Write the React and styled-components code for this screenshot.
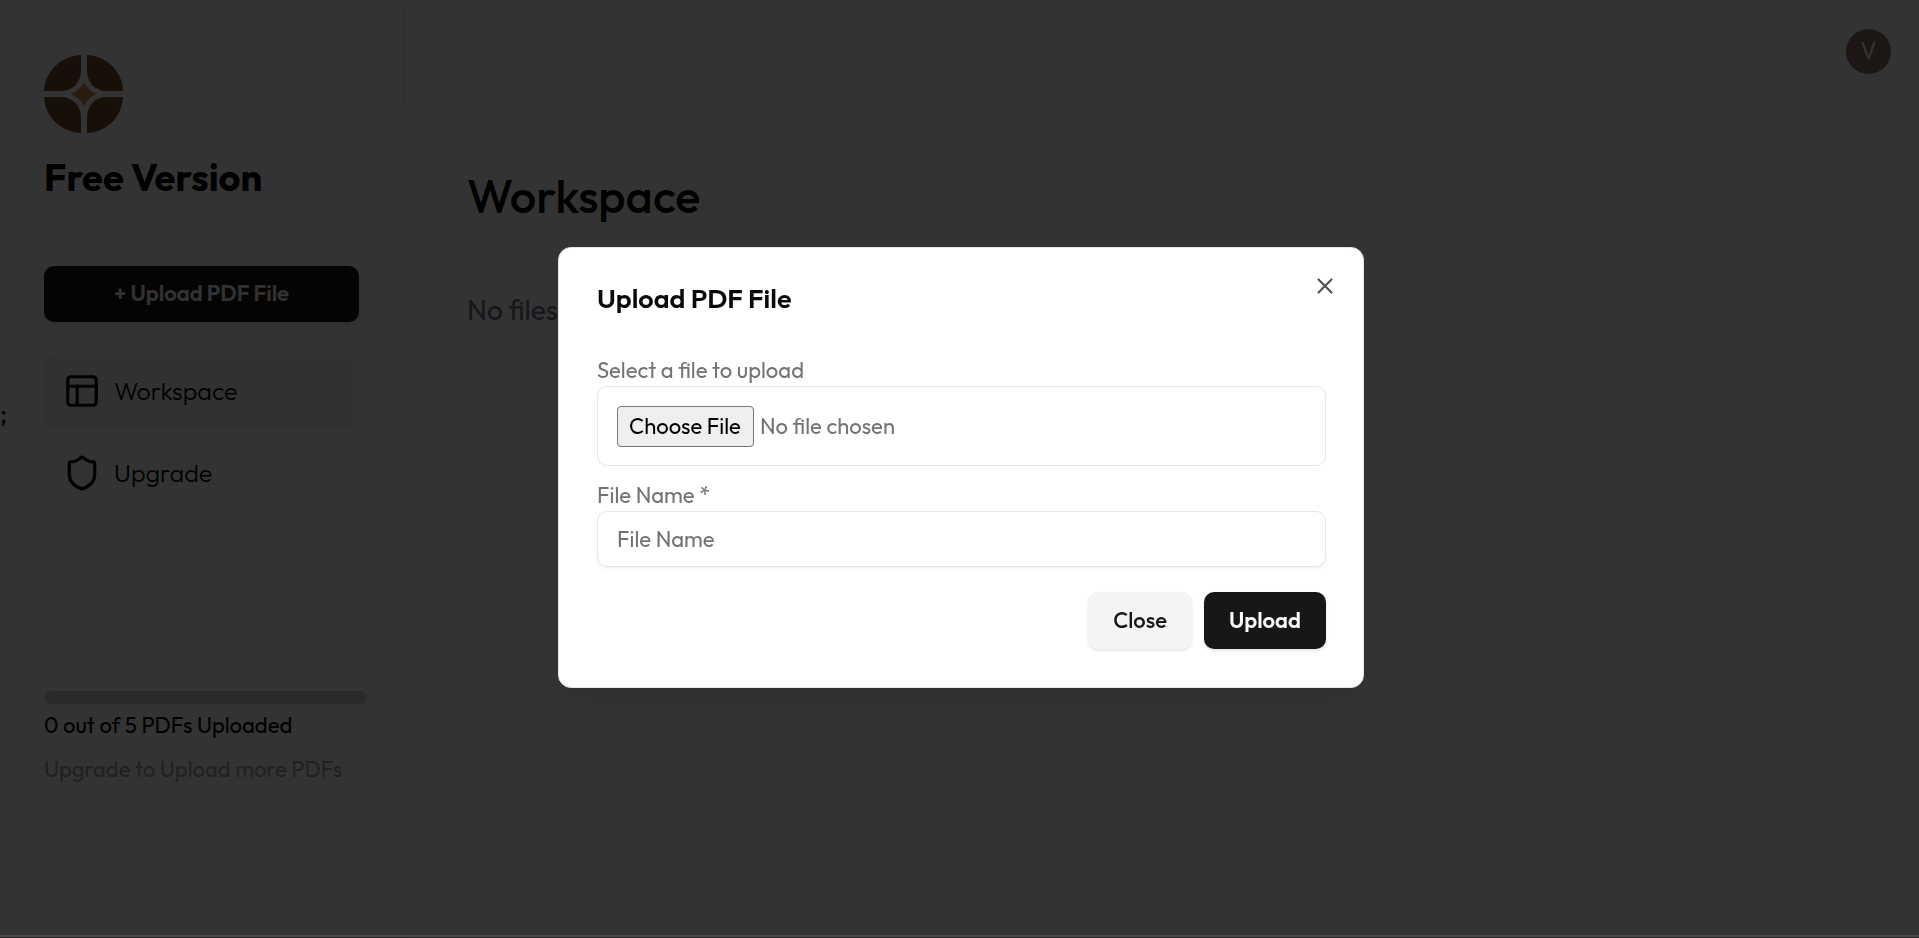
import React from "react";
import styled, { createGlobalStyle } from "styled-components";
import { PanelsTopLeft, Shield, X } from "lucide-react";

const GlobalStyle = createGlobalStyle`
  *, *::before, *::after { box-sizing: border-box; }
  body {
    margin: 0;
    background: #fff;
    color: #000;
    font-family: Outfit, Lato, "Open Sans", sans-serif;
    font-size: 22px;
    line-height: 32px;
  }
  button, input { font: inherit; }
  h1, h2, p { margin: 0; }
`;

const Page = styled.div`
  display: flex;
  min-height: 100vh;
  border-bottom: 1px solid #241f22;
`;

const Stray = styled.span`
  position: absolute;
  left: 0;
  top: 398px;
  font-size: 26px;
`;

const Sidebar = styled.aside`
  display: flex;
  flex-direction: column;
  flex: 0 0 404px;
  min-width: 0;
  padding: 54px 44px 0;
  border-right: 1px solid #f5f5f5;
  box-shadow: 0 2px 5px rgba(0, 0, 0, 0.08);
`;

const Plan = styled.h2`
  margin-top: 19px;
  font-size: 38px;
  line-height: 48px;
  font-weight: 700;
`;

const Button = styled.button`
  height: 57px;
  padding: 0 25px 1px;
  border: 0;
  border-radius: 10px;
  font-size: 22px;
  font-weight: ${(p) => (p.$secondary ? 500 : 600)};
  color: ${(p) => (p.$secondary ? "#171717" : "#fafafa")};
  background: ${(p) => (p.$secondary ? "#f4f4f5" : "#171717")};
  box-shadow: 0 2px 3px rgba(0, 0, 0, 0.1);
`;

const SideButton = styled(Button)`
  width: 100%;
  margin-top: 65px;
  height: 56px;
  padding-bottom: 2px;
`;

const Nav = styled.nav`
  display: flex;
  flex-direction: column;
  gap: 7px;
  margin-top: 32px;
`;

const NavLink = styled.a`
  display: flex;
  align-items: center;
  gap: 13px;
  height: 75px;
  padding: 0 19px 1px;
  border-radius: 13px;
  font-size: 25px;
  font-weight: 300;
  color: #000;
  text-decoration: none;
  background: ${(p) => (p.$active ? "#f1f5f9" : "transparent")};
`;

const Usage = styled.section`
  margin-top: 180px;
`;

const Track = styled.div`
  width: calc(100% + 8px);
  height: 13px;
  border-radius: 7px;
  background: #d1d1d1;
`;

const UsageText = styled.p`
  margin-top: ${(p) => (p.$muted ? 12 : 5)}px;
  color: ${(p) => (p.$muted ? "#9ca3af" : "#000")};
  white-space: nowrap;
`;

const Content = styled.div`
  flex: 1;
  min-width: 0;
`;

const Header = styled.header`
  display: flex;
  align-items: center;
  justify-content: flex-end;
  height: 106px;
  padding: 0 28px 3px;
  border-bottom: 1px solid #f5f5f5;
  box-shadow: 0 2px 3px rgba(0, 0, 0, 0.05);
`;

const Avatar = styled.button`
  width: 45px;
  height: 45px;
  padding: 0;
  border: 0;
  border-radius: 50%;
  background: #8d6e63;
  color: #fff;
  font-family: Roboto, sans-serif;
  font-size: 24px;
  font-weight: 400;
`;

const Main = styled.main`
  padding: 58px 63px;
`;

const Heading = styled.h1`
  font-size: 47px;
  line-height: 64px;
  font-weight: 500;
`;

const Empty = styled.p`
  margin-top: 62px;
  font-size: 28px;
  line-height: 40px;
  color: #6b7280;
`;

const Overlay = styled.div`
  position: fixed;
  inset: 0 0 1px;
  display: flex;
  align-items: center;
  justify-content: center;
  padding-left: 3px;
  border-bottom: 2px solid #4a4a4a;
  background: rgba(0, 0, 0, 0.8);
`;

const Dialog = styled.div`
  position: relative;
  width: 806px;
  max-width: 100%;
  padding: 30px 37px 38px 38px;
  border: 1px solid #e5e5e5;
  border-radius: 13px;
  background: #fff;
  box-shadow: 0 16px 24px -5px rgba(0, 0, 0, 0.1);
`;

const Title = styled.h2`
  font-size: 27px;
  line-height: 40px;
  font-weight: 600;
  color: #0a0a0a;
`;

const Field = styled.div`
  display: flex;
  flex-direction: column;
  margin-top: ${(p) => p.$top}px;
  color: #737373;
`;

const FileInput = styled.input`
  height: 80px;
  padding: 19px;
  border: 1px solid #e5e5e5;
  border-radius: 10px;

  &::file-selector-button {
    height: 41px;
    margin: 0 6px 0 0;
    padding: 0 12px 1px 11px;
    border: 1px solid #767676;
    border-radius: 4px;
    background: #efefef;
    color: #000;
    font: inherit;
  }
`;

const TextInput = styled.input`
  height: 56px;
  padding: 0 19px;
  border: 1px solid #e5e5e5;
  border-radius: 10px;
  box-shadow: 0 2px 3px rgba(0, 0, 0, 0.05);

  &::placeholder { color: #737373; opacity: 1; }
`;

const Actions = styled.div`
  display: flex;
  justify-content: flex-end;
  gap: 12px;
  margin-top: 25px;
`;

const CloseIcon = styled.button`
  position: absolute;
  top: 25px;
  right: 25px;
  display: flex;
  padding: 0;
  border: 0;
  background: none;
  color: #535353;
`;

const Logo = () => (
  <svg width="80" height="80" viewBox="0 0 80 80" aria-label="Logo" role="img">
    <g fill="#74512a">
      <path d="M37 1V16C37 29 29 37 16 37H0C1 17 17 2 37 1Z" />
      <path d="M43 1V16C43 29 51 37 63 37H79C78 17 63 2 43 1Z" />
      <path d="M37 79V64C37 51 29 43 16 43H0C1 63 17 78 37 79Z" />
      <path d="M43 79V64C43 51 51 43 63 43H79C78 63 63 78 43 79Z" />
    </g>
    <path fill="#c98d46" d="M40 28Q44 36 52 40Q44 44 40 52Q36 44 27 40Q36 36 40 28Z" />
  </svg>
);

export default function App() {
  return (
    <>
      <GlobalStyle />
      <Page>
        <Stray>;</Stray>
        <Sidebar>
          <Logo />
          <Plan>Free Version</Plan>
          <SideButton type="button">+ Upload PDF File</SideButton>
          <Nav>
            <NavLink href="#workspace" $active>
              <PanelsTopLeft size={38} />
              Workspace
            </NavLink>
            <NavLink href="#upgrade">
              <Shield size={38} />
              Upgrade
            </NavLink>
          </Nav>
          <Usage>
            <Track role="progressbar" aria-label="PDFs uploaded" aria-valuenow={0} aria-valuemax={5} />
            <UsageText>0 out of 5 PDFs Uploaded</UsageText>
            <UsageText $muted>Upgrade to Upload more PDFs</UsageText>
          </Usage>
        </Sidebar>
        <Content>
          <Header>
            <Avatar type="button">V</Avatar>
          </Header>
          <Main>
            <Heading>Workspace</Heading>
            <Empty>No files</Empty>
          </Main>
        </Content>
      </Page>
      <Overlay>
        <Dialog role="dialog" aria-modal="true" aria-labelledby="dialog-title">
          <Title id="dialog-title">Upload PDF File</Title>
          <Field $top={36}>
            <label htmlFor="pdf">Select a file to upload</label>
            <FileInput id="pdf" type="file" />
          </Field>
          <Field $top={13}>
            <label htmlFor="name">File Name *</label>
            <TextInput id="name" type="text" placeholder="File Name" />
          </Field>
          <Actions>
            <Button type="button" $secondary>Close</Button>
            <Button type="button">Upload</Button>
          </Actions>
          <CloseIcon type="button" aria-label="Close dialog">
            <X size={26} strokeWidth={2} />
          </CloseIcon>
        </Dialog>
      </Overlay>
    </>
  );
}
